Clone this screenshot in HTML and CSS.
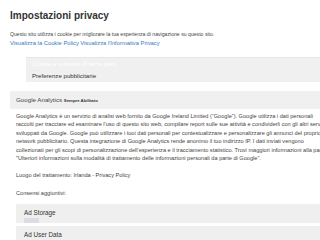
FILE: index.html
```html
<!DOCTYPE html>
<html lang="it">
<head>
  <meta charset="UTF-8">
  <title>Impostazioni privacy</title>
  <link rel="stylesheet" href="styles.css">
</head>
<body>

  <div class="panel">
    <h1 class="title">Impostazioni privacy</h1>
    <p class="intro">Questo sito utilizza i cookie per migliorare la tua esperienza di navigazione su questo sito.</p>
    <p class="intro links">
      <a href="#">Visualizza la Cookie Policy</a> <a href="#">Visualizza l'Informativa Privacy</a>
    </p>

    <ul class="tabs">
      <li class="tab active">Cookie e software di terze parti</li>
      <li class="tab">Preferenze pubblicitarie</li>
    </ul>

    <!-- Servizio sempre attivo -->
    <div class="service">
      <div class="service-head">
        Google Analytics <span class="badge">Sempre Abilitato</span>
      </div>
      <div class="service-body">
        <p class="desc">Google Analytics è un servizio di analisi web fornito da Google Ireland Limited (“Google”). Google utilizza i dati personali<br>
          raccolti per tracciare ed esaminare l'uso di questo sito web, compilare report sulle sue attività e condividerli con gli altri servizi<br>
          sviluppati da Google. Google può utilizzare i tuoi dati personali per contestualizzare e personalizzare gli annunci del proprio<br>
          network pubblicitario. Questa integrazione di Google Analytics rende anonimo il tuo indirizzo IP. I dati inviati vengono<br>
          collezionati per gli scopi di personalizzazione dell'esperienza e il tracciamento statistico. Trovi maggiori informazioni alla pagina<br>
          "Ulteriori informazioni sulla modalità di trattamento delle informazioni personali da parte di Google".</p>
        <p class="desc place">Luogo del trattamento: Irlanda - Privacy Policy</p>
        <p class="desc label">Consensi aggiuntivi:</p>

        <div class="consent">
          <span class="consent-name">Ad Storage</span>
          <span class="toggle"></span>
        </div>
        <div class="consent">
          <span class="consent-name">Ad User Data</span>
        </div>
      </div>
    </div>
  </div>

</body>
</html>
```

FILE: styles.css
```css
html, body {
  margin: 0;
  overflow: hidden;
  background: #ffffff;
}

body {
  font-family: "Liberation Sans", Arial, sans-serif;
  color: #444;
}

.panel {
  width: 330px;
  padding: 10px 0 0 10px;
}

.title {
  margin: 0 0 8px;
  font-size: 10px;
  line-height: 12px;
  font-weight: bold;
  color: #333;
}

.intro {
  margin: 0;
  font-size: 5.15px;
  line-height: 9px;
  color: #444;
}

.links a {
  font-size: 5.8px;
  color: #3478c0;
  text-decoration: none;
}

.tabs {
  list-style: none;
  margin: 9px 0 0 16px;
  padding: 0;
  background: #f0f0f0;
  border-top: 1px solid #e6e6e6;
}

.tab {
  padding-left: 6px;
  font-size: 6.1px;
  line-height: 12px;
  color: #333;
}

.tab.active {
  color: #ffffff;
}

.service {
  margin-top: 9px;
}

.service-head {
  background: #f0f0f0;
  height: 18px;
  padding-left: 6px;
  font-size: 6.2px;
  line-height: 18px;
  color: #444;
}

.badge {
  font-size: 4.3px;
  font-weight: bold;
  color: #333;
}

.service-body {
  padding: 3px 0 0 6px;
}

.desc {
  margin: 0;
  font-size: 5.6px;
  line-height: 8.4px;
  white-space: nowrap;
  color: #444;
}

.place {
  margin-top: 9px;
}

.label {
  margin-top: 9.5px;
}

.consent {
  display: flex;
  flex-direction: column;
  align-items: flex-start;
  height: 15px;
  margin-top: 6px;
  padding: 4px 8px 0;
  background: #efefef;
}

.consent + .consent {
  margin-top: 3px;
}

.consent-name {
  font-size: 6.3px;
  line-height: 10px;
  color: #333;
}

.toggle {
  width: 15px;
  height: 8px;
  background: #dcdce3;
}
```
